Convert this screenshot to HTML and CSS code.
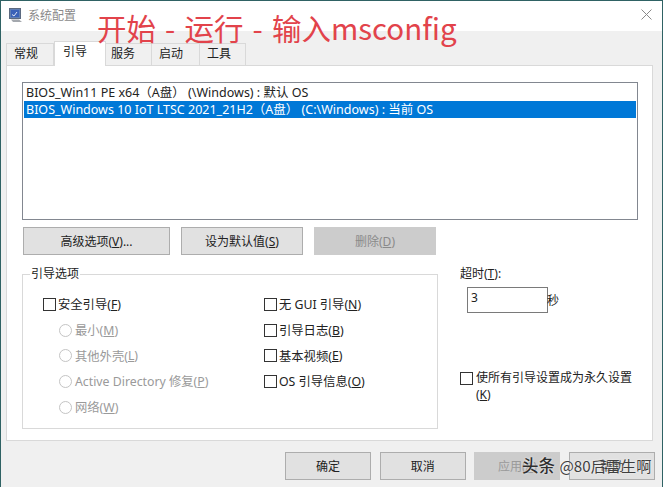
FILE: index.html
```html
<!DOCTYPE html>
<html lang="zh">
<head>
<meta charset="utf-8">
<title>系统配置</title>
<link rel="stylesheet" href="styles.css">
</head>
<body>
<div class="window">
  <header class="titlebar">
    <svg class="app-icon" width="14" height="15" viewBox="0 0 14 15"><rect x="0.5" y="0.5" width="11" height="10" fill="#5f7fb5" stroke="#5c6a80"/><rect x="2" y="2" width="8" height="7" fill="#3a62b8"/><path d="M3 6.5l2 1.5 3-4" fill="none" stroke="#dfe6f5"/><path d="M2 11.5h8l3 2.5H4z" fill="#a4a8ae"/></svg>
    <span class="title">系统配置</span>
    <svg class="close" width="11" height="11" viewBox="0 0 11 11"><path d="M0.5 0.5l10 10M10.500 0.5l-10 10" stroke="#8a8a8a" stroke-width="1" fill="none"/></svg>
  </header>
  <main class="client">
    <nav class="tabs">
      <span class="tab tab-first">常规</span>
      <span class="tab tab-active">引导</span>
      <span class="tab tab-tight">服务</span>
      <span class="tab tab-wide">启动</span>
      <span class="tab">工具</span>
    </nav>
    <section class="panel">
      <div class="listbox">
        <div class="row">BIOS_Win11 PE x64（A盘） (\Windows) : 默认 OS</div>
        <div class="row row-selected">BIOS_Windows 10 IoT LTSC 2021_21H2（A盘） (C:\Windows) : 当前 OS</div>
      </div>
      <div class="actions">
        <button class="btn btn-adv">高级选项(<u>V</u>)...</button>
        <button class="btn btn-mid">设为默认值(<u>S</u>)</button>
        <button class="btn btn-mid btn-disabled">删除(<u>D</u>)</button>
      </div>
      <div class="lower">
        <fieldset class="group">
          <legend>引导选项</legend>
          <div class="group-cols">
            <div class="col col-left">
              <label class="opt"><i class="cb"></i>安全引导(<u>F</u>)</label>
              <label class="opt sub"><i class="rb"></i>最小(<u>M</u>)</label>
              <label class="opt sub"><i class="rb"></i>其他外壳(<u>L</u>)</label>
              <label class="opt sub"><i class="rb"></i>Active Directory 修复(<u>P</u>)</label>
              <label class="opt sub"><i class="rb"></i>网络(<u>W</u>)</label>
            </div>
            <div class="col">
              <label class="opt"><i class="cb"></i>无 GUI 引导(<u>N</u>)</label>
              <label class="opt"><i class="cb"></i>引导日志(<u>B</u>)</label>
              <label class="opt"><i class="cb"></i>基本视频(<u>E</u>)</label>
              <label class="opt"><i class="cb"></i>OS 引导信息(<u>O</u>)</label>
            </div>
          </div>
        </fieldset>
        <aside class="side">
          <div class="timeout-label">超时(<u>T</u>):</div>
          <div class="timeout-row"><span class="input">3</span><span class="unit">秒</span></div>
          <label class="perm"><i class="cb"></i><span>使所有引导设置成为永久设置<br>(<u>K</u>)</span></label>
        </aside>
      </div>
    </section>
    <footer class="footer">
      <button class="btn btn-foot">确定</button>
      <button class="btn btn-foot">取消</button>
      <button class="btn btn-foot btn-disabled btn-apply">应用(<u>A</u>)</button>
      <button class="btn btn-foot">帮助</button>
    </footer>
  </main>
  <div class="headline">开始 - 运行 - 输入msconfig</div>
  <div class="watermark"><b>头条</b> @80后雷生啊</div>
</div>
</body>
</html>
```
FILE: styles.css
```css
* { box-sizing: border-box; }
html, body { margin: 0; padding: 0; }
body {
  width: 663px;
  height: 487px;
  overflow: hidden;
  font-family: "Noto Sans", "Noto Sans CJK SC", sans-serif;
  font-size: 12px;
  color: #222;
}
.window {
  position: relative;
  width: 663px;
  height: 487px;
  display: flex;
  flex-direction: column;
  border: 1px solid #2f6264;
  border-bottom: 0;
  background: #f0f0f0;
}
.titlebar {
  height: 30px;
  background: #fff;
  display: flex;
  align-items: center;
  padding: 0 8px;
  flex: none;
}
.app-icon { margin-right: 5px; margin-top: -2px; }
.title { color: #8a8a8a; font-size: 12px; margin-top: -3px; }
.close { margin-left: auto; margin-right: 2px; margin-top: -3px; }
.client { flex: 1; padding: 11px 10px 0 5px; display: flex; flex-direction: column; }
.tabs { display: flex; height: 23px; position: relative; z-index: 1; }
.tab {
  width: 46px;
  height: 22px;
  margin-top: 1px;
  padding-left: 7px;
  background: #f0f0f0;
  border: 1px solid #d9d9d9;
  border-bottom: 0;
  border-left: 0;
  line-height: 19px;
  color: #222;
}
.tab-first { width: 48px; padding-left: 7px; border-left: 1px solid #d9d9d9; }
.tab-tight { padding-left: 5px; }
.tab-wide { width: 48px; }
.tab-active {
  width: 52px;
  height: 25px;
  margin-top: -1px;
  padding-left: 8px;
  background: #fff;
  line-height: 19px;
  border-left: 1px solid #d9d9d9;
  position: relative;
  z-index: 2;
}
.panel {
  width: 647px;
  height: 376px;
  background: #fff;
  border: 1px solid #d9d9d9;
  padding: 16px 15px 0;
  flex: none;
}
.listbox {
  width: 616px;
  height: 138px;
  border: 1px solid #828790;
  padding: 1px;
  background: #fff;
}
.row { height: 17px; line-height: 17px; padding-left: 2px; color: #222; white-space: pre; font-size: 12.5px; }
.row-selected { background: #0078d7; color: #fff; }
.actions { display: flex; gap: 11px; margin-top: 7px; padding-left: 1px; }
.btn {
  height: 28px;
  background: #e1e1e1;
  border: 1px solid #adadad;
  font: inherit;
  color: #222;
  padding: 0;
}
.btn-adv { width: 147px; }
.btn-mid { width: 122px; }
.btn-disabled { background: #cccccc; border-color: #cccccc; color: #8a8a8a; }
.lower { display: flex; margin-top: 12px; }
.group {
  flex: none;
  width: 416px;
  height: 162px;
  margin: 0;
  padding: 0;
  border: 1px solid #d9d9d9;
  min-width: 0;
}
.group legend { padding: 0 1px; margin-left: 7px; line-height: 14px; }
.group-cols { display: flex; padding: 10.500px 0 0 20px; }
.col { display: flex; flex-direction: column; }
.col-left { width: 221px; }
.opt { display: flex; align-items: center; height: 25.700px; white-space: nowrap; font-size: 12.3px; }
.sub { padding-left: 16px; color: #9a9a9a; }
.cb {
  width: 13px;
  height: 13px;
  border: 1px solid #333;
  background: #fff;
  margin-right: 2px;
  flex: none;
}
.rb {
  width: 13px;
  height: 13px;
  border: 1px solid #c4c4c4;
  border-radius: 50%;
  background: #fff;
  margin-right: 3px;
  flex: none;
}
.side { margin-left: 22px; flex: none; width: 176px; display: flex; flex-direction: column; }
.timeout-label { line-height: 16px; margin-top: -1px; }
.timeout-row { display: flex; align-items: center; margin-top: 5px; padding-left: 7px; }
.input {
  width: 81px;
  height: 26px;
  border: 1px solid #7a7a7a;
  background: #fff;
  padding-left: 3px;
  line-height: 20px;
}
.unit { margin-left: -1px; }
.perm { display: flex; align-items: flex-start; margin-top: 56px; line-height: 17px; }
.perm .cb { margin-top: 3px; margin-right: 3px; }
.footer { display: flex; gap: 8.670px; justify-content: flex-end; padding: 11px 0 0; margin-right: -3px; }
.btn-foot { width: 86px; height: 28px; }
.btn-apply { color: #9a9a9a; }
.headline {
  position: absolute;
  left: 96px;
  top: 7px;
  font-size: 29.500px;
  line-height: 38px;
  word-spacing: 2.500px;
  color: #e2434b;
  white-space: nowrap;
  font-family: "Noto Sans CJK SC", "Noto Sans", sans-serif;
  z-index: 5;
}
.watermark {
  position: absolute;
  left: 521px;
  top: 452px;
  font-size: 15.200px;
  line-height: 24px;
  color: #3f3f3f;
  white-space: nowrap;
  z-index: 5;
  font-family: "Noto Sans CJK SC", sans-serif;
  text-shadow: 0 0 2px #fff;
}
.watermark b { font-size: 16.500px; font-weight: 500; color: #2e2e2e; margin-right: 1px; }
```
